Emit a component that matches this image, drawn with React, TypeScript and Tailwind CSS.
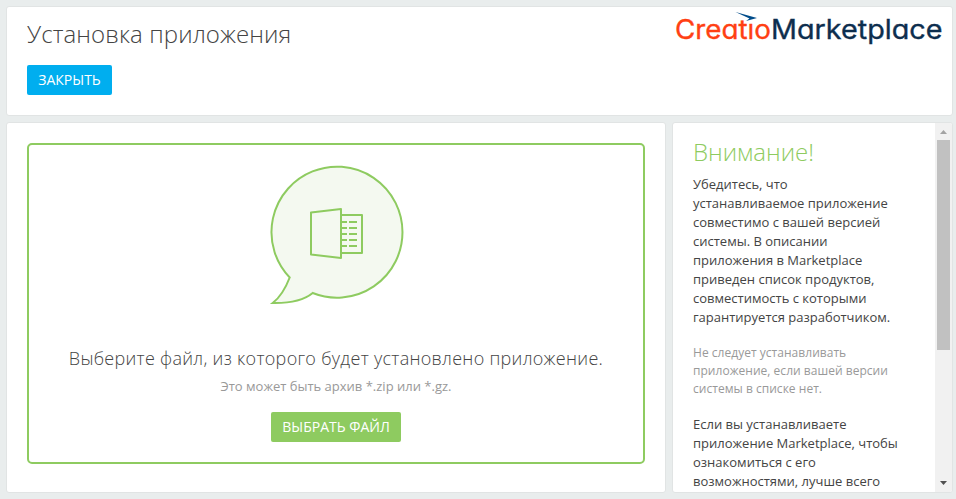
import React from "react";

function Logo() {
  return (
    <svg width="272" height="40" viewBox="-2 0 272 40" className="block font-['Inter',sans-serif] [font-feature-settings:'cv11']" aria-label="Creatio Marketplace">
      <text x="-1" y="28.8" fontSize="26.5" fontWeight="400" stroke="#ff4013" strokeWidth="0.35" fill="#ff4013" textLength="96" lengthAdjust="spacingAndGlyphs">Creatıo</text>
      <text x="95" y="28.8" fontSize="26.5" fontWeight="400" stroke="#0d2e4e" strokeWidth="0.35" fill="#0d2e4e" textLength="171.5" lengthAdjust="spacingAndGlyphs">Marketplace</text>
      <path d="M59.5 2 L81 8 L70 11 L73.5 8.4 Z" fill="#004c8a" />
    </svg>
  );
}

function BubbleIcon() {
  return (
    <svg width="134" height="142" viewBox="0 0 134 142" fill="none" stroke="#8ecb60" strokeWidth="2" className="block overflow-visible">
      <path d="M20.7 112.5 A65.5 65.5 0 1 1 43.7 128 Q31 138.5 3.7 138 Q14 130 20.7 112.5 Z" fill="#f4f9f0" strokeLinejoin="miter" />
      <path d="M42 47.5 L72 44 V93 L42 89.5 Z" strokeLinejoin="round" />
      <path d="M72 50 H93 V88 H72" strokeLinejoin="round" />
      <path d="M73 57 H78 M80 57 H88 M73 63 H78 M80 63 H88 M73 69 H78 M80 69 H88 M73 75 H78 M80 75 H88 M73 81 H78 M80 81 H88" />
    </svg>
  );
}

const intro = [
  "Убедитесь, что",
  "устанавливаемое приложение",
  "совместимо с вашей версией",
  "системы. В описании",
  "приложения в Marketplace",
  "приведен список продуктов,",
  "совместимость с которыми",
  "гарантируется разработчиком.",
];
const note = ["Не следует устанавливать", "приложение, если вашей версии", "системы в списке нет."];
const advice = ["Если вы устанавливаете", "приложение Marketplace, чтобы", "ознакомиться с его", "возможностями, лучше всего"];

function Lines({ lines }: { lines: string[] }) {
  return (
    <>
      {lines.map((line) => (
        <span key={line} className="block whitespace-nowrap">{line}</span>
      ))}
    </>
  );
}

export default function App() {
  return (
    <div className="flex h-[499px] w-[956px] flex-col gap-[6px] overflow-hidden bg-[#e9eded] pt-[6px] pr-[3px] pb-[6px] pl-[6px] font-['Open_Sans','Noto_Sans',sans-serif] text-[#444]">
      <header className="flex h-[110px] shrink-0 justify-between rounded-[3px] border border-[#e1e4e4] bg-white pl-5">
        <div className="flex flex-col items-start">
          <h1 className="mt-[10px] h-[34px] text-[24px] leading-[34px] font-light tracking-[0.1px] whitespace-nowrap">Установка приложения</h1>
          <button className="mt-[14px] h-[30px] w-[85px] rounded-[2px] bg-[#00aeef] text-[14px] leading-[30px] whitespace-nowrap text-white">ЗАКРЫТЬ</button>
        </div>
        <div className="mt-[3px] mr-[6px]"><Logo /></div>
      </header>
      <div className="flex min-h-0 flex-1 gap-[6px]">
        <main className="w-[660px] rounded-[3px] border border-[#e1e4e4] bg-white px-5 pt-5">
          <section className="flex h-[321px] flex-col items-center rounded-[5px] border-2 border-[#8ecb60]">
            <div className="mt-[20px]"><BubbleIcon /></div>
            <h2 className="mt-[37px] h-[28px] text-[18px] leading-[28px] font-light tracking-[0.29px] whitespace-nowrap">Выберите файл, из которого будет установлено приложение.</h2>
            <p className="mt-[5px] h-[18px] text-[13px] leading-[18px] whitespace-nowrap text-[#999]">Это может быть архив *.zip или *.gz.</p>
            <button className="mt-[17px] h-[30px] w-[130px] rounded-[2px] bg-[#8ecb60] text-[14px] leading-[30px] whitespace-nowrap text-white">ВЫБРАТЬ ФАЙЛ</button>
          </section>
        </main>
        <aside className="flex w-[281px] overflow-hidden rounded-[3px] border border-[#e1e4e4] bg-white">
          <div className="min-w-0 flex-1 overflow-hidden pl-5">
            <h2 className="mt-[12px] h-[34px] text-[24px] leading-[34px] font-light text-[#8ecb60]">Внимание!</h2>
            <p className="mt-[6px] text-[13px] leading-[19px]"><Lines lines={intro} /></p>
            <p className="mt-[17px] text-[12px] leading-[18px] tracking-[0.03px] text-[#999]"><Lines lines={note} /></p>
            <p className="mt-[17px] text-[13px] leading-[19px]"><Lines lines={advice} /></p>
          </div>
          <div className="flex w-[17px] flex-col items-center justify-between bg-[#f1f1f1]">
            <div className="flex flex-col items-center">
              <svg width="17" height="17" viewBox="0 0 17 17" className="block"><path d="M5 11 L8.5 7 L12 11 Z" fill="#a3a3a3" /></svg>
              <div className="h-[210px] w-[13px] bg-[#c1c1c1]" />
            </div>
            <svg width="17" height="17" viewBox="0 0 17 17" className="block"><path d="M5 6 L12 6 L8.5 10 Z" fill="#505050" /></svg>
          </div>
        </aside>
      </div>
    </div>
  );
}
